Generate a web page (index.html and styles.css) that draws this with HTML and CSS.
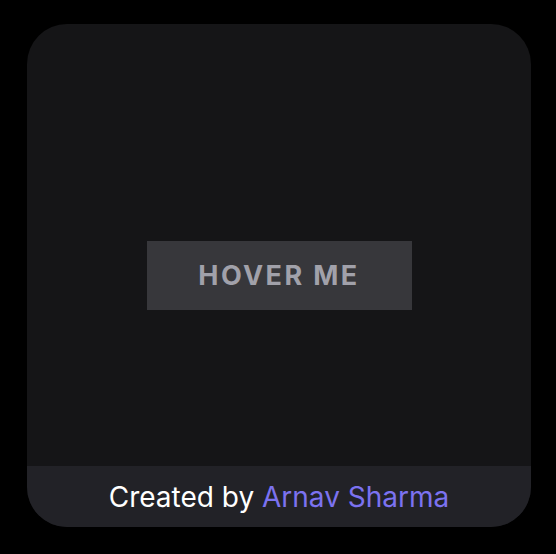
FILE: index.html
```html
<!DOCTYPE html>
<html>
<head>
<meta charset="utf-8">
<link rel="stylesheet" href="styles.css">
</head>
<body>
<div class="card">
  <div class="stage">
    <button class="btn">HOVER ME</button>
  </div>
  <div class="footer">Created by <span class="author">Arnav Sharma</span></div>
</div>
</body>
</html>
```
FILE: styles.css
```css
html, body {
  margin: 0;
  padding: 0;
  background: #000;
}
body {
  width: 556px;
  height: 554px;
  display: flex;
  justify-content: center;
  align-items: flex-start;
  padding-top: 24px;
  box-sizing: border-box;
  font-family: Inter, "Noto Sans", sans-serif;
}
.card {
  width: 504px;
  height: 503px;
  margin-left: 2px;
  border-radius: 40px;
  background: #151517;
  overflow: hidden;
  display: flex;
  flex-direction: column;
}
.stage {
  flex: 1;
  display: flex;
  align-items: center;
  justify-content: center;
}
.btn {
  width: 265px;
  height: 69px;
  margin-top: 61px;
  border: none;
  background: #37373b;
  color: #a1a1aa;
  font-family: Inter, sans-serif;
  font-weight: 700;
  font-size: 27px;
  letter-spacing: 2.4px;
  padding: 0;
}
.footer {
  height: 61px;
  background: #222227;
  color: #fff;
  font-size: 28px;
  display: flex;
  align-items: center;
  justify-content: center;
  white-space: pre;
}
.author {
  color: #7c72f0;
}
```
